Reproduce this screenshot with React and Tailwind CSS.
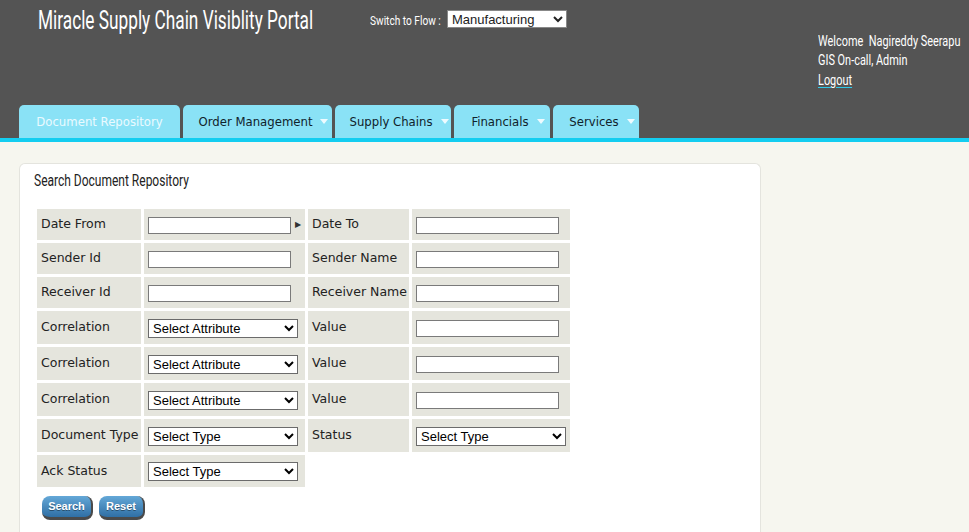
import { useState } from 'react'

const roboto = { fontFamily: 'Roboto, "Open Sans", sans-serif' }
const arial = { fontFamily: '"Liberation Sans", Arial, sans-serif' }
const verdana = { fontFamily: '"DejaVu Sans", Verdana, sans-serif' }
const tahoma = { fontFamily: '"DejaVu Sans Condensed", "DejaVu Sans", Tahoma, sans-serif' }

const tabs = [
  { name: 'Document Repository', w: 'w-[161px]', active: true },
  { name: 'Order Management', w: 'w-[149px]' },
  { name: 'Supply Chains', w: 'w-[116px]' },
  { name: 'Financials', w: 'w-[96px]' },
  { name: 'Services', w: 'w-[86px]' },
]

// the portal uses a condensed face we don't have, so squeeze Roboto
function Narrow({ w, s, className = '', inner = '', children }) {
  return (
    <span className={`inline-block whitespace-nowrap ${w} ${className}`} style={roboto}>
      <span className={`inline-block origin-left ${s} ${inner}`}>{children}</span>
    </span>
  )
}

function TextBox() {
  return <input type="text" className="w-[143px] h-[17px] border border-[#7a7a7a] bg-white align-middle" />
}

function Pick({ label }) {
  return (
    <select className="w-[150px] h-[19px] border border-[#6b6b6b] bg-white text-[13px] text-black px-0 align-middle" style={arial}>
      <option>{label}</option>
    </select>
  )
}

function Caret() {
  return (
    <svg width="8" height="5" viewBox="0 0 8 5" className="shrink-0">
      <path d="M0 0 L8 0 L4 5 Z" fill="#eefbff" />
    </svg>
  )
}

export default function App() {
  const [flow, setFlow] = useState('Manufacturing')

  const lbl = 'bg-[#e5e5dd] px-[4px] text-[12.5px] text-[#222] whitespace-nowrap'
  const val = 'bg-[#e5e5dd] px-[4px] whitespace-nowrap'
  const btn = 'h-[24px] rounded-[8px] bg-gradient-to-b from-[#64a8d8] to-[#2f6fa4] border-r-2 border-b-[3px] border-[#4a4a4a] text-white text-[11px] font-bold [text-shadow:0_1px_0_rgba(0,0,0,0.4)]'

  return (
    <div className="min-h-[532px] bg-[#f6f6ef]">
      <div className="h-[138px] bg-[#545454] flex flex-col">
        <div className="flex h-[105px]">
          <div className="w-[370px] pl-[38px] pt-[1px] text-white text-[25px]">
            <Narrow w="w-[280px]" s="scale-x-[0.69]">Miracle Supply Chain Visiblity Portal</Narrow>
          </div>
          <div className="w-[448px] pt-[10px] flex items-start">
            <Narrow w="w-[77px]" s="scale-x-[0.78]" className="text-white text-[13px] mt-[1px]">Switch to Flow :</Narrow>
            <select
              value={flow}
              onChange={(e) => setFlow(e.target.value)}
              className="w-[120px] h-[18px] bg-white text-[13px] text-[#222] border border-[#888]"
              style={arial}
            >
              <option>Manufacturing</option>
              <option>Logistics</option>
            </select>
          </div>
          <div className="pt-[32px] text-white text-[14px] leading-[19px] flex flex-col items-start">
            <Narrow w="w-[145px]" s="scale-x-[0.78]">Welcome&nbsp; Nagireddy Seerapu</Narrow>
            <Narrow w="w-[100px]" s="scale-x-[0.78]">GIS On-call, Admin</Narrow>
            <a href="#">
              <Narrow w="w-[36px]" s="scale-x-[0.78]" inner="underline decoration-[#2ec9ea] underline-offset-2">Logout</Narrow>
            </a>
          </div>
        </div>
        <div className="flex gap-[3px] pl-[19px] h-[33px]">
          {tabs.map((t) => (
            <div
              key={t.name}
              className={`${t.w} h-[33px] rounded-t-[5px] bg-[#8ae2f6] flex items-center justify-center gap-[8px] text-[13px] ${t.active ? 'text-[#eafaff]' : 'text-[#10222c] pl-[12px]'}`}
              style={tahoma}
            >
              <span>{t.name}</span>
              {!t.active && <Caret />}
            </div>
          ))}
        </div>
      </div>
      <div className="h-[4px] bg-[#13cdf0]" />

      <div className="pt-[21px] pl-[19px]">
        <div className="w-[742px] min-h-[370px] bg-white border border-[#e4e4de] border-b-0 rounded-t-[6px] px-[14px] pt-[5px]">
          <div className="text-[16px] text-[#222] leading-[22px]">
            <Narrow w="w-[160px]" s="scale-x-[0.75]">Search Document Repository</Narrow>
          </div>
          <table className="mt-[14px] table-fixed w-[539px] border-separate border-spacing-[3px]" style={verdana}>
            <colgroup>
              <col className="w-[104px]" />
              <col className="w-[161px]" />
              <col className="w-[101px]" />
              <col className="w-[158px]" />
            </colgroup>
            <tbody>
              <tr className="h-[31px]">
                <td className={lbl}>Date From</td>
                <td className={val}><TextBox /><span className="ml-[4px] text-[8px] text-[#333] align-middle">▶</span></td>
                <td className={lbl}>Date To</td>
                <td className={val}><TextBox /></td>
              </tr>
              <tr className="h-[31px]">
                <td className={lbl}>Sender Id</td>
                <td className={val}><TextBox /></td>
                <td className={lbl}>Sender Name</td>
                <td className={val}><TextBox /></td>
              </tr>
              <tr className="h-[31px]">
                <td className={lbl}>Receiver Id</td>
                <td className={val}><TextBox /></td>
                <td className={lbl}>Receiver Name</td>
                <td className={val}><TextBox /></td>
              </tr>
              {[0, 1, 2].map((i) => (
                <tr key={i} className="h-[33px]">
                  <td className={lbl}>Correlation</td>
                  <td className={val}><Pick label="Select Attribute" /></td>
                  <td className={lbl}>Value</td>
                  <td className={val}><TextBox /></td>
                </tr>
              ))}
              <tr className="h-[33px]">
                <td className={lbl}>Document Type</td>
                <td className={val}><Pick label="Select Type" /></td>
                <td className={lbl}>Status</td>
                <td className={val}><Pick label="Select Type" /></td>
              </tr>
              <tr className="h-[32px]">
                <td className={lbl}>Ack Status</td>
                <td className={val}><Pick label="Select Type" /></td>
                <td></td>
                <td></td>
              </tr>
            </tbody>
          </table>
          <div className="flex gap-[6px] pl-[8px] mt-[6px]" style={arial}>
            <button className={`${btn} w-[51px]`}>Search</button>
            <button className={`${btn} w-[46px]`}>Reset</button>
          </div>
        </div>
      </div>
    </div>
  )
}
